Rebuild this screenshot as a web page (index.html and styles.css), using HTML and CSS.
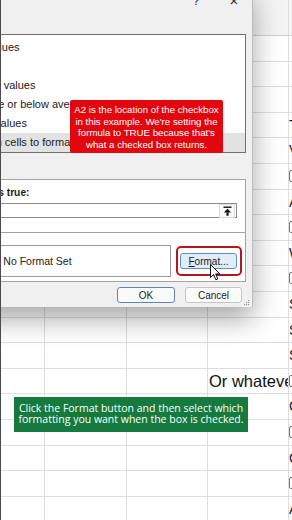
FILE: index.html
```html
<!DOCTYPE html>
<html lang="en">
<head>
  <meta charset="UTF-8" />
  <meta name="viewport" content="width=device-width, initial-scale=1.0" />
  <title>New Formatting Rule</title>
  <link rel="stylesheet" href="styles.css">
</head>
<body>
  <div class="screen">
    <div class="sheet">
      <div class="row head"><span></span><span></span><span></span><span></span><span></span></div>
      <div class="row"><span></span><span></span><span></span><span></span><span></span></div>
      <div class="row"><span></span><span></span><span></span><span></span><span></span></div>
      <div class="row"><span></span><span></span><span></span><span></span><span></span></div>
      <div class="row"><span></span><span></span><span></span><span></span><span>To</span></div>
      <div class="row"><span></span><span></span><span></span><span></span><span>Value</span></div>
      <div class="row"><span></span><span></span><span></span><span></span><span><i class="box"></i></span></div>
      <div class="row"><span></span><span></span><span></span><span></span><span>And</span></div>
      <div class="row"><span></span><span></span><span></span><span></span><span><i class="box"></i></span></div>
      <div class="row"><span></span><span></span><span></span><span></span><span>When</span></div>
      <div class="row"><span></span><span></span><span></span><span></span><span><i class="box"></i></span></div>
      <div class="row"><span></span><span></span><span></span><span></span><span>Set</span></div>
      <div class="row"><span></span><span></span><span></span><span></span><span>So</span></div>
      <div class="row"><span></span><span></span><span></span><span></span><span>See</span></div>
      <div class="row"><span></span><span></span><span></span><span class="big">Or whatever</span><span><i class="box"></i></span></div>
      <div class="row"><span></span><span></span><span></span><span></span><span>Check</span></div>
      <div class="row"><span></span><span></span><span></span><span></span><span><i class="box"></i></span></div>
      <div class="row"><span></span><span></span><span></span><span></span><span>Color</span></div>
      <div class="row"><span></span><span></span><span></span><span></span><span><i class="box"></i></span></div>
      <div class="row"><span></span><span></span><span></span><span></span><span>Any</span></div>
    </div>

    <div class="dialog">
      <div class="titlebar">
        <span class="title">New Formatting Rule</span>
        <span class="help">?</span>
        <span class="close">&times;</span>
      </div>
      <div class="label">Select a Rule Type:</div>
      <ul class="rules">
        <li>&#9658; Format all cells based on their values</li>
        <li>&#9658; Format only cells that contain</li>
        <li>&#9658; Format only top or bottom ranked values</li>
        <li>&#9658; Format only values that are above or below average</li>
        <li>&#9658; Format only unique or duplicate values</li>
        <li class="selected">&#9658; Use a formula to determine which cells to format</li>
      </ul>
      <div class="label tall">Edit the Rule Description:</div>
      <div class="desc">
        <div class="desc-label">Format values where this formula is true:</div>
        <div class="formula">
          <input type="text" value="">
          <span class="collapse">
            <svg width="9" height="10" viewBox="0 0 9 10">
              <rect x="0.5" y="0.5" width="8" height="1.4" fill="#111"/>
              <path d="M4.5 2.8 L8.2 6.6 L0.8 6.6 Z" fill="#111"/>
              <rect x="3.4" y="6.4" width="2.2" height="3.3" fill="#111"/>
            </svg>
          </span>
        </div>
        <div class="divider"></div>
        <div class="preview-row">
          <span class="preview-label">Preview:</span>
          <div class="preview">No Format Set</div>
          <div class="highlight">
            <button class="format-btn"><u>F</u>ormat...</button>
          </div>
        </div>
      </div>
      <div class="actions">
        <button class="btn ok">OK</button>
        <button class="btn">Cancel</button>
      </div>
      <svg class="grip" width="6" height="6" viewBox="0 0 6 6">
        <rect x="4" y="0" width="1.2" height="1.2" fill="#9a9a9a"/>
        <rect x="2" y="2" width="1.2" height="1.2" fill="#9a9a9a"/>
        <rect x="4" y="2" width="1.2" height="1.2" fill="#9a9a9a"/>
        <rect x="0" y="4" width="1.2" height="1.2" fill="#9a9a9a"/>
        <rect x="2" y="4" width="1.2" height="1.2" fill="#9a9a9a"/>
        <rect x="4" y="4" width="1.2" height="1.2" fill="#9a9a9a"/>
      </svg>
    </div>

    <div class="callout red">
      A2 is the location of the checkbox<br>
      in this example. We're setting the<br>
      formula to TRUE because that's<br>
      what a checked box returns.
    </div>

    <div class="callout green">
      Click the Format button and then select which<br>
      formatting you want when the box is checked.
    </div>

    <svg class="cursor" width="11" height="17" viewBox="0 0 11 17">
      <path d="M0.5 0.5 L0.5 13.5 L3.6 10.6 L5.8 15.8 L7.8 15 L5.7 9.9 L9.8 9.9 Z" fill="#fff" stroke="#111" stroke-width="1"/>
    </svg>
  </div>
</body>
</html>
```

FILE: styles.css
```css
body {
  margin: 0;
  background-color: #fff;
}

.screen {
  position: relative;
  width: 292px;
  height: 520px;
  overflow: hidden;
  box-sizing: border-box;
  border-left: 1px solid #4b4b4b;
  background-color: #fff;
  font-family: 'Liberation Sans', Arial, sans-serif;
  color: #1b1b1b;
}

/* spreadsheet behind the dialog */
.row {
  display: flex;
  height: 25.6px;
  box-sizing: border-box;
  border-bottom: 1px solid #dedede;
}

.row.head {
  height: 36px;
  background-color: #f4f4f4;
  border-bottom-color: #d0d0d0;
}

.row span {
  flex: none;
  box-sizing: border-box;
  border-right: 1px solid #dedede;
  white-space: nowrap;
  overflow: hidden;
  font-size: 14px;
  line-height: 24px;
  color: #1a1a1a;
}

.row span:nth-child(1) { width: 44px; }
.row span:nth-child(2) { width: 82px; }
.row span:nth-child(3) { width: 81px; }
.row span:nth-child(4) { width: 81px; padding-left: 1px; }
.row span:nth-child(5) { flex: 1; border-right: none; }

.row span.big {
  font-size: 16.5px;
  color: #111;
}

.box {
  display: inline-block;
  width: 10px;
  height: 10px;
  margin-top: 6px;
  border: 1.5px solid #777;
  border-radius: 2px;
}

/* dialog */
.dialog {
  position: absolute;
  left: -191px;
  top: -14px;
  width: 443px;
  box-sizing: border-box;
  padding: 0 6px 4px 12px;
  background-color: #f0f0f0;
  border-right: 1px solid #bdbdbd;
  box-shadow: 0 12px 26px rgba(0, 0, 0, 0.35);
  font-size: 11px;
}

.titlebar {
  display: flex;
  align-items: center;
  height: 28px;
  font-size: 13px;
}

.title {
  flex: 1;
  font-size: 11px;
}

.help,
.close {
  width: 12px;
  text-align: center;
  color: #333;
}

.help {
  margin-right: 26px;
}

.close {
  margin-right: 6px;
  font-size: 15px;
}

.label {
  height: 20px;
  line-height: 20px;
  white-space: nowrap;
}

.label.tall {
  height: 26px;
  line-height: 26px;
}

.rules {
  list-style: none;
  margin: 0;
  padding: 3px 0 0;
  background-color: #fff;
  border: 1px solid #707070;
}

.rules li {
  height: 19px;
  line-height: 19px;
  padding-left: 1px;
  white-space: nowrap;
  overflow: hidden;
}

.rules li.selected {
  background-color: #e2e2e2;
}

.desc {
  background-color: #fff;
  border: 1px solid #a3a3a3;
  padding: 6px 8px 4px 6px;
}

.desc-label {
  font-size: 10.25px;
  font-weight: bold;
  line-height: 13px;
  white-space: nowrap;
}

.formula {
  display: flex;
  align-items: center;
  height: 15px;
  margin-top: 4px;
  box-sizing: border-box;
  border: 1px solid #8c8c8c;
  background-color: #fff;
}

.formula input {
  flex: 1;
  min-width: 0;
  height: 100%;
  border: none;
  padding: 0;
  outline: none;
  background: transparent;
}

.collapse {
  display: flex;
  align-items: center;
  justify-content: center;
  width: 14px;
  height: 12px;
  margin-right: 1px;
  border: 1px solid #dcdcdc;
  background-color: #fafafa;
}

.divider {
  height: 1px;
  margin: 14px -8px 0 -6px;
  background-color: #a3a3a3;
}

.preview-row {
  display: flex;
  align-items: center;
  gap: 6px;
  margin-top: 12px;
}

.preview-label {
  flex: 0 0 69px;
  white-space: nowrap;
}

.preview {
  flex: 1;
  height: 32px;
  box-sizing: border-box;
  border: 1px solid #9a9a9a;
  line-height: 30px;
  text-align: center;
  font-size: 10.5px;
  color: #222;
}

.highlight {
  margin-left: -1px;
  margin-right: -5px;
  padding: 5px 3px 5px 2px;
  border: 2px solid #b8141d;
  border-radius: 5px;
}

.format-btn {
  display: block;
  width: 57px;
  height: 16px;
  padding: 0;
  border: 1px solid #5f8fbf;
  border-radius: 3px;
  background-color: #e1edf9;
  font-family: 'Liberation Sans', Arial, sans-serif;
  font-size: 10px;
  color: #1b1b1b;
}

.actions {
  display: flex;
  justify-content: flex-end;
  gap: 10px;
  margin-top: 5px;
  padding-right: 4px;
}

.btn {
  width: 57px;
  height: 16px;
  padding: 0;
  border: 1px solid #c6c6c6;
  border-radius: 3px;
  background-color: #fbfbfb;
  font-family: 'Liberation Sans', Arial, sans-serif;
  font-size: 10px;
  color: #1b1b1b;
}

.btn.ok {
  width: 58px;
  border-color: #5a88b5;
}

.grip {
  position: absolute;
  right: 2px;
  bottom: 1px;
}

/* video annotations */
.callout {
  position: absolute;
  box-sizing: border-box;
  color: #fff;
  text-align: center;
  white-space: nowrap;
}

.callout.red {
  left: 69px;
  top: 100px;
  width: 153px;
  height: 53px;
  padding-top: 4px;
  background-color: #e2070f;
  border-radius: 2px;
  font-size: 9.7px;
  line-height: 11.5px;
}

.callout.green {
  left: 13px;
  top: 397px;
  width: 234px;
  height: 35px;
  padding-top: 6px;
  background-color: #147a3d;
  font-family: 'Open Sans', sans-serif;
  font-size: 10.5px;
  line-height: 11px;
}

.cursor {
  position: absolute;
  left: 209px;
  top: 264px;
}
```
